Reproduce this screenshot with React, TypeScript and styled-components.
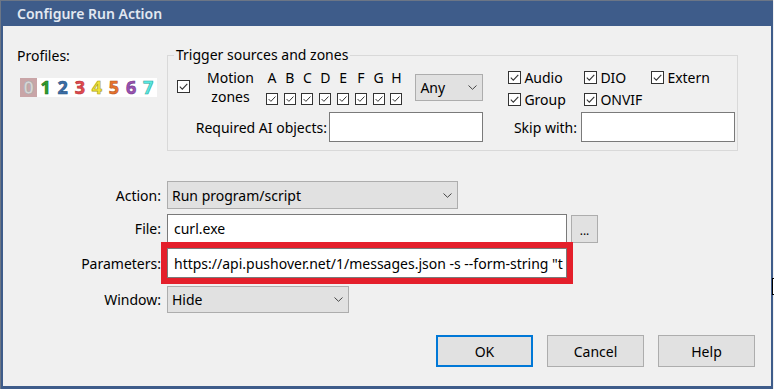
import React from "react";
import styled, { createGlobalStyle } from "styled-components";

const GlobalStyle = createGlobalStyle`
  html, body { margin: 0; padding: 0; background: #f0f0f0; }
  body {
    font-family: "Noto Sans", "Open Sans", sans-serif;
    font-size: 14px;
    color: #000;
  }
`;

const Screen = styled.div`
  position: relative;
  width: 774px;
  height: 389px;
  overflow: hidden;
  background: #f0f0f0;
`;

const Window = styled.div`
  width: 773px;
  height: 389px;
  box-sizing: border-box;
  display: flex;
  flex-direction: column;
  background: #3e5c8a;
  border-top: 1px solid #6c7686;
  border-left: 1px solid #6c7686;
  padding: 0 2px 3px 2px;
`;

const TitleBar = styled.div`
  height: 25px;
  display: flex;
  align-items: center;
  padding-left: 14px;
  color: #e2e8f1;
  font-size: 14px;
  font-weight: 600;
`;

const Body = styled.div`
  flex: 1;
  background: #f0f0f0;
  display: flex;
  flex-direction: column;
`;

const TopSection = styled.div`
  display: flex;
  align-items: flex-start;
`;

const ProfilesCol = styled.div`
  width: 164px;
  box-sizing: border-box;
  padding-left: 14px;
  display: flex;
  flex-direction: column;
`;

const ProfilesLabel = styled.div`
  margin-top: 20px;
  line-height: 20px;
`;

const DigitStrip = styled.div`
  margin-top: 12px;
  margin-left: 3px;
  display: flex;
  background: #fff;
  width: 137px;
  height: 19px;
`;

const Digit = styled.span<{ $color: string; $edge: string; $bg?: string }>`
  width: 17.1px;
  height: 19px;
  display: flex;
  align-items: center;
  justify-content: center;
  font-family: "Open Sans", "Noto Sans", sans-serif;
  font-weight: 700;
  font-size: 18px;
  line-height: 19px;
  color: ${(p) => p.$color};
  background: ${(p) => p.$bg || "transparent"};
  -webkit-text-stroke: 0.6px ${(p) => p.$edge};
`;

const GroupBox = styled.div`
  position: relative;
  margin-top: 29px;
  width: 571px;
  height: 96px;
  box-sizing: border-box;
  border: 1px solid #d9d9d9;
  padding: 10px 1px 0 9px;
`;

const Legend = styled.span`
  position: absolute;
  top: -11px;
  left: 6px;
  padding: 0 2px;
  background: #f0f0f0;
  line-height: 20px;
`;

const GroupRow1 = styled.div`
  display: flex;
  align-items: flex-start;
  height: 44px;
`;

const GroupRow2 = styled.div`
  display: flex;
  align-items: center;
  margin-top: 2px;
`;

const Box = styled.span<{ $size: number; $mt?: number }>`
  width: ${(p) => p.$size}px;
  height: ${(p) => p.$size}px;
  margin-top: ${(p) => p.$mt || 0}px;
  box-sizing: border-box;
  border: 1px solid #333;
  background: #fff;
  display: inline-flex;
  align-items: center;
  justify-content: center;
  flex-shrink: 0;
`;

const Check: React.FC<{ size?: number; mt?: number }> = ({ size = 13, mt }) => (
  <Box $size={size} $mt={mt}>
    <svg width={size - 2} height={size - 2} viewBox="0 0 11 11">
      <path d="M1.8 5.6 L4.3 8.1 L9.3 2.8" stroke="#333" strokeWidth="1.1" fill="none" />
    </svg>
  </Box>
);

const MotionLabel = styled.div`
  margin-left: 8px;
  margin-top: 2px;
  width: 65px;
  text-align: center;
  line-height: 19px;
`;

const Zones = styled.div`
  display: flex;
  margin-top: 2px;
`;

const ZoneCol = styled.div`
  width: 17.8px;
  display: flex;
  flex-direction: column;
  align-items: center;
`;

const ZoneLetter = styled.span`
  line-height: 19px;
  height: 19px;
  margin-bottom: 6px;
`;

const Select = styled.div<{ $w: number; $h: number; $mt?: number; $ml?: number }>`
  width: ${(p) => p.$w}px;
  height: ${(p) => p.$h}px;
  margin-top: ${(p) => p.$mt || 0}px;
  margin-left: ${(p) => p.$ml || 0}px;
  box-sizing: border-box;
  background: #e1e1e1;
  border: 1px solid #adadad;
  display: flex;
  align-items: center;
  justify-content: space-between;
  padding: 0 5px 0 4px;
  flex-shrink: 0;
`;

const Chevron = () => (
  <svg width="9" height="5" viewBox="0 0 9 5">
    <path d="M0.5 0.5 L4.5 4.3 L8.5 0.5" stroke="#444" strokeWidth="1" fill="none" />
  </svg>
);

const SourceGrid = styled.div`
  margin-left: 25px;
  display: grid;
  grid-template-columns: 76px 67px auto;
  grid-auto-rows: 22px;
`;

const CheckItem = styled.label`
  display: flex;
  align-items: center;
  gap: 3px;
  white-space: nowrap;
`;

const FieldLabel = styled.span<{ $w: number; $mr: number }>`
  width: ${(p) => p.$w}px;
  margin-right: ${(p) => p.$mr}px;
  text-align: right;
  white-space: nowrap;
  flex-shrink: 0;
`;

const TextBox = styled.div<{ $w: number; $h: number; $hl?: boolean }>`
  width: ${(p) => p.$w}px;
  height: ${(p) => p.$h}px;
  box-sizing: border-box;
  background: #fff;
  border: 1px solid #7a7a7a;
  display: flex;
  align-items: center;
  padding-left: 6px;
  overflow: hidden;
  white-space: nowrap;
  flex-shrink: 0;
  outline: ${(p) => (p.$hl ? "6px solid #e41f2b" : "none")};
`;

const Form = styled.div`
  margin-top: 30px;
  display: flex;
  flex-direction: column;
`;

const FormRow = styled.div<{ $mt: number }>`
  display: flex;
  align-items: center;
  margin-top: ${(p) => p.$mt}px;
`;

const FormLabel = styled.span`
  width: 158px;
  margin-right: 6px;
  text-align: right;
  flex-shrink: 0;
`;

const BrowseButton = styled.div`
  width: 27px;
  height: 28px;
  margin-left: 4px;
  box-sizing: border-box;
  background: #e1e1e1;
  border: 1px solid #adadad;
  display: flex;
  align-items: flex-end;
  justify-content: center;
  padding-bottom: 5px;
  font-size: 12px;
  line-height: 12px;
`;

const ButtonRow = styled.div`
  display: flex;
  justify-content: flex-end;
  gap: 14px;
  padding-right: 16px;
  margin-top: 22px;
`;

const Button = styled.div<{ $default?: boolean }>`
  width: 97px;
  height: 32px;
  box-sizing: border-box;
  background: #e1e1e1;
  border: ${(p) => (p.$default ? "2px solid #0078d7" : "1px solid #adadad")};
  display: flex;
  align-items: center;
  justify-content: center;
`;

const Cursor = styled.div`
  position: absolute;
  left: 772px;
  top: 278px;
  width: 4px;
  height: 17px;
  box-sizing: border-box;
  border: 1px solid #000;
  background: #fff;
`;

const digits = [
  { d: "0", c: "#d6d6d6", e: "#a8a8a8", bg: "#c9a5a7" },
  { d: "1", c: "#2f9e2f", e: "#1d6e1d" },
  { d: "2", c: "#3b6ea8", e: "#28527f" },
  { d: "3", c: "#e24a4f", e: "#b83338" },
  { d: "4", c: "#f2e63a", e: "#a89c10" },
  { d: "5", c: "#e8722e", e: "#b4541c" },
  { d: "6", c: "#9a52b4", e: "#723a88" },
  { d: "7", c: "#5ae8e0", e: "#2aa8a0" },
];

const zones = ["A", "B", "C", "D", "E", "F", "G", "H"];

export default function App() {
  return (
    <Screen>
      <GlobalStyle />
      <Window>
        <TitleBar>Configure Run Action</TitleBar>
        <Body>
          <TopSection>
            <ProfilesCol>
              <ProfilesLabel>Profiles:</ProfilesLabel>
              <DigitStrip>
                {digits.map((x) => (
                  <Digit key={x.d} $color={x.c} $edge={x.e} $bg={x.bg}>
                    {x.d}
                  </Digit>
                ))}
              </DigitStrip>
            </ProfilesCol>
            <GroupBox>
              <Legend>Trigger sources and zones</Legend>
              <GroupRow1>
                <Check mt={14} />
                <MotionLabel>
                  Motion
                  <br />
                  zones
                </MotionLabel>
                <Zones>
                  {zones.map((z) => (
                    <ZoneCol key={z}>
                      <ZoneLetter>{z}</ZoneLetter>
                      <Check size={12} />
                    </ZoneCol>
                  ))}
                </Zones>
                <Select $w={68} $h={27} $mt={8} $ml={10}>
                  <span>Any</span>
                  <Chevron />
                </Select>
                <SourceGrid>
                  <CheckItem>
                    <Check />
                    Audio
                  </CheckItem>
                  <CheckItem>
                    <Check />
                    DIO
                  </CheckItem>
                  <CheckItem>
                    <Check />
                    Extern
                  </CheckItem>
                  <CheckItem>
                    <Check />
                    Group
                  </CheckItem>
                  <CheckItem>
                    <Check />
                    ONVIF
                  </CheckItem>
                </SourceGrid>
              </GroupRow1>
              <GroupRow2>
                <FieldLabel $w={150} $mr={2}>
                  Required AI objects:
                </FieldLabel>
                <TextBox $w={154} $h={30} />
                <FieldLabel $w={94} $mr={4}>
                  Skip with:
                </FieldLabel>
                <TextBox $w={154} $h={30} />
              </GroupRow2>
            </GroupBox>
          </TopSection>
          <Form>
            <FormRow $mt={0}>
              <FormLabel>Action:</FormLabel>
              <Select $w={291} $h={28}>
                <span>Run program/script</span>
                <Chevron />
              </Select>
            </FormRow>
            <FormRow $mt={5}>
              <FormLabel>File:</FormLabel>
              <TextBox $w={400} $h={29}>curl.exe</TextBox>
              <BrowseButton>...</BrowseButton>
            </FormRow>
            <FormRow $mt={5}>
              <FormLabel>Parameters:</FormLabel>
              <TextBox $w={400} $h={30} $hl>
                https://api.pushover.net/1/messages.json -s --form-string "t
              </TextBox>
            </FormRow>
            <FormRow $mt={8}>
              <FormLabel>Window:</FormLabel>
              <Select $w={182} $h={27}>
                <span>Hide</span>
                <Chevron />
              </Select>
            </FormRow>
          </Form>
          <ButtonRow>
            <Button $default>OK</Button>
            <Button>Cancel</Button>
            <Button>Help</Button>
          </ButtonRow>
        </Body>
      </Window>
      <Cursor />
    </Screen>
  );
}
